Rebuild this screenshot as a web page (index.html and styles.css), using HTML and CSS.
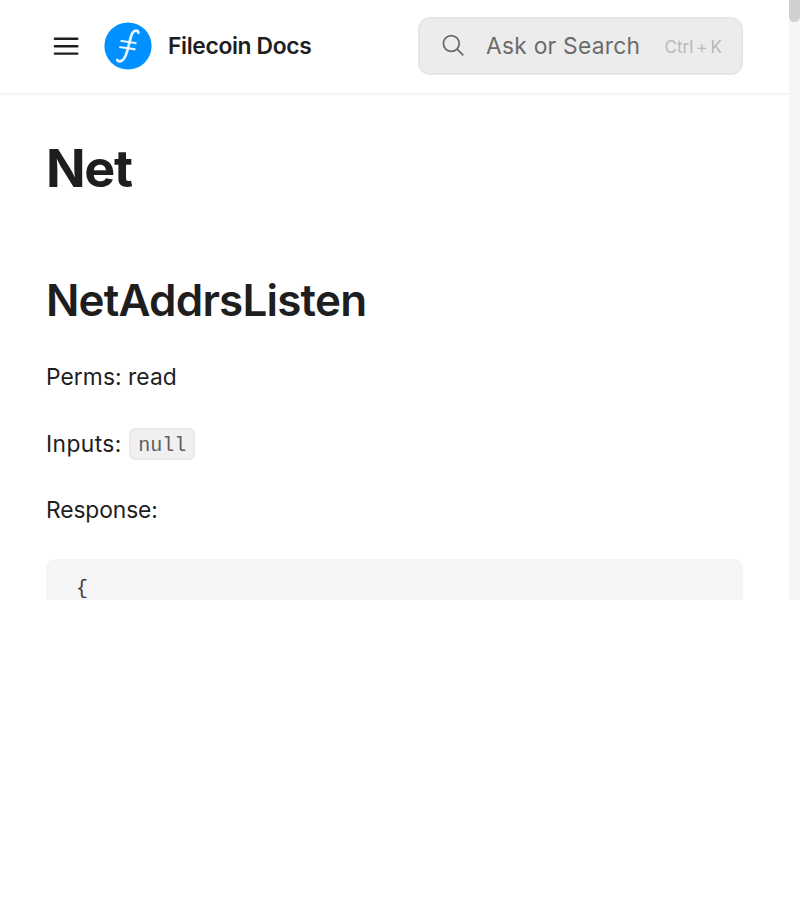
FILE: index.html
```html
<!DOCTYPE html>
<html lang="en">
<head>
<meta charset="utf-8">
<title>Net | Filecoin Docs</title>
<link rel="stylesheet" href="styles.css">
</head>
<body>
<div class="viewport">
  <div class="page">
    <header class="header">
      <svg class="menu" viewBox="0 0 26 20" width="26" height="20"><path d="M1.900 2.700H24.300M1.900 10.200H24.300M1.900 17.600H24.300"/></svg>
      <svg class="logo" viewBox="0 0 48 48" width="48" height="48">
        <circle cx="24" cy="24" r="23.6"/>
        <path class="stem" d="M34.500 10.800C33.500 7.500 29.500 8 27.500 13C25.500 18.500 24 29 21.200 34.500C18.700 40 14.500 40.200 13.200 38"/>
        <path class="bars" d="M16.500 18.800L32.500 21.200M15.300 25L31.500 27.400"/>
      </svg>
      <span class="brand">Filecoin Docs</span>
      <div class="search">
        <svg class="glass" viewBox="0 0 24 24" width="24" height="24"><circle cx="9.300" cy="9.500" r="7.900"/><path d="M15.100 15.200L21.300 21.400"/></svg>
        <span class="hint">Ask or Search</span>
        <span class="keys"><span>Ctrl</span><span>+</span><span>K</span></span>
      </div>
    </header>
    <main class="content">
      <h1>Net</h1>
      <h2>NetAddrsListen</h2>
      <p class="perms">Perms: read</p>
      <p class="inputs">Inputs: <code>null</code></p>
      <p class="response">Response:</p>
      <pre class="block">{</pre>
    </main>
  </div>
  <div class="scrollbar"><div class="thumb"></div></div>
</div>
</body>
</html>
```
FILE: styles.css
```css
* { box-sizing: border-box; }
body {
  margin: 0;
  background: #fff;
  color: #1e1e1e;
  font-family: Inter, sans-serif;
}
.viewport { display: flex; height: 600px; overflow: hidden; }
.page { width: 789px; }
.scrollbar { width: 11px; background: #f5f5f5; }
.thumb { height: 22px; border-radius: 0 0 6px 6px; background: #d0d0d0; }
.header {
  display: flex;
  align-items: center;
  height: 95px;
  padding: 0 46px 3px 53px;
  border-bottom: 2px solid #f5f5f5;
}
.menu { fill: none; stroke: #1e1e1e; stroke-width: 2.4; stroke-linecap: round; margin-top: 2px; }
.logo { margin: 2px 0 0 24.5px; fill: #0090ff; }
.logo path { fill: none; stroke: #fff; stroke-opacity: .9; stroke-linecap: round; }
.logo .stem { stroke-width: 2.7; }
.logo .bars { stroke-width: 2.1; stroke-linecap: butt; }
.brand { margin-left: 16.5px; font-size: 22.8px; font-weight: 600; letter-spacing: -0.34px; }
.search {
  display: flex;
  align-items: center;
  width: 325px;
  height: 58px;
  margin-left: auto;
  padding: 0 19px 0 22px;
  border: 2px solid #e6e6e6;
  border-radius: 12px;
  background: #ececec;
  margin-top: 2px;
}
.glass { fill: none; stroke: #6b6b6b; stroke-width: 1.8; }
.hint { margin: -2px 0 0 20px; font-size: 22.8px; letter-spacing: 0.24px; color: #6b6b6b; white-space: nowrap; }
.keys { display: flex; gap: 3px; margin-left: auto; margin-top: 1px; font-size: 17px; color: #b9b9b9; }
.content { padding: 42px 46px 0; }
h1 { margin: 0; font-size: 52px; line-height: 64px; font-weight: 700; letter-spacing: -1.3px; }
h2 { margin: 71px 0 0; font-size: 44px; line-height: 56px; font-weight: 600; letter-spacing: -0.8px; }
p { margin: 0; height: 38px; font-size: 22.8px; line-height: 38px; white-space: nowrap; }
.perms { margin-top: 30px; letter-spacing: 0.06px; }
.inputs { margin-top: 29px; letter-spacing: 0.4px; }
.response { margin-top: 28px; letter-spacing: -0.1px; }
code {
  display: inline-block;
  height: 32px;
  margin-left: 0.7px;
  padding: 0 7px;
  border: 2px solid #e9e9e9;
  border-radius: 6px;
  background: #f0f0f0;
  color: #5e5e5e;
  font: 20px/32px "Liberation Mono", monospace;
  letter-spacing: 0;
  vertical-align: 1px;
}
.block {
  height: 80px;
  margin: 30px 0 0;
  padding: 14px 30px;
  border-radius: 9px;
  background: #f5f5f5;
  color: #3c3c3c;
  font: 20px/32px "Liberation Mono", monospace;
}
```
